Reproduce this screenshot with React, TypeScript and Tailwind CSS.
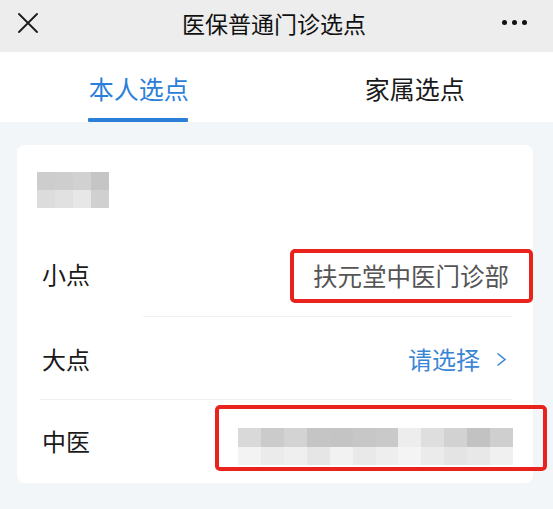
import React from "react";

const font = { fontFamily: '"Noto Sans CJK SC", "Noto Sans", sans-serif' };

const headerBlocks = [
  ["bg-[#cdcdcd]", "bg-[#cecece]", "bg-[#d1d1d1]", "bg-[#c5c5c5]"],
  ["bg-[#dcdcdc]", "bg-[#e1e1e1]", "bg-[#e7e7e7]", "bg-[#d0d0d0]"],
];

const nameBlocks = [
  [
    "bg-[#d9d9d9]",
    "bg-[#cbcbcb]",
    "bg-[#d3d3d3]",
    "bg-[#c5c5c5]",
    "bg-[#c4c4c4]",
    "bg-[#c7c7c7]",
    "bg-[#c9c9c9]",
    "bg-[#ededed]",
    "bg-[#dedede]",
    "bg-[#d2d2d2]",
    "bg-[#c2c2c2]",
    "bg-[#cfcfcf]",
  ],
  [
    "bg-[#f3f3f3]",
    "bg-[#ebebeb]",
    "bg-[#efefef]",
    "bg-[#e6e6e6]",
    "bg-[#f2f2f2]",
    "bg-[#e9e9e9]",
    "bg-[#eeeeee]",
    "bg-[#f4f4f4]",
    "bg-[#ebebeb]",
    "bg-[#e4e4e4]",
    "bg-[#e8e8e8]",
    "bg-[#f0f0f0]",
  ],
];

function Pixels({ rows }: { rows: string[][] }) {
  return (
    <div className="flex h-full w-full flex-col">
      {rows.map((row, i) => (
        <div key={i} className="flex flex-1">
          {row.map((cls, j) => (
            <div key={j} className={`flex-1 ${cls}`} />
          ))}
        </div>
      ))}
    </div>
  );
}

export default function App() {
  return (
    <div className="h-[509px] w-[553px] overflow-hidden bg-[#f3f6f9]" style={font}>
      {/* top bar */}
      <div className="flex h-[52px] items-center justify-between bg-[#ededed] pl-[18px] pr-[26px]">
        <svg width="20" height="20" viewBox="0 0 20 20" className="-mt-[6px]">
          <path d="M1 1L19 19M19 1L1 19" stroke="#1a1a1a" strokeWidth="1.8" strokeLinecap="round" />
        </svg>
        <div className="-mt-[6px] ml-[8px] text-[23px] leading-[26px] text-[#111]">医保普通门诊选点</div>
        <div className="-mt-[8px] flex gap-[5px]">
          <span className="h-[5px] w-[5px] rounded-full bg-[#111]" />
          <span className="h-[5px] w-[5px] rounded-full bg-[#111]" />
          <span className="h-[5px] w-[5px] rounded-full bg-[#111]" />
        </div>
      </div>

      {/* tabs */}
      <div className="flex h-[70px] bg-white">
        <div className="flex flex-1 flex-col items-center justify-between pt-[23px]">
          <div className="ml-[1px] text-[25px] leading-[27px] text-[#2b7fd9]">本人选点</div>
          <div className="h-[4px] w-[100px] rounded-[1px] bg-[#2b7fd9]" />
        </div>
        <div className="flex flex-1 flex-col items-center pt-[23px]">
          <div className="text-[25px] leading-[27px] text-[#1a1a1a]">家属选点</div>
        </div>
      </div>

      {/* card */}
      <div className="ml-[17px] mr-[20px] mt-[23px] rounded-[8px] bg-white">
        <div className="h-[85px] pl-[20px] pt-[27px]">
          <div className="h-[36px] w-[72px]">
            <Pixels rows={headerBlocks} />
          </div>
        </div>

        <div className="flex h-[86px] items-start justify-between pl-[25px]">
          <div className="mt-[31px] text-[24px] leading-[26px] text-[#1a1a1a]">小点</div>
          <div className="mt-[19px] flex h-[54px] w-[243px] items-center justify-end rounded-[5px] border-[4px] border-[#e8231e] pr-[20px]">
            <span className="text-[24.5px] leading-[26px] text-[#555]">扶元堂中医门诊部</span>
          </div>
        </div>
        <div className="ml-[126px] mr-[21px] h-px bg-[#eef0f3]" />

        <div className="flex h-[82px] items-center justify-between pl-[25px] pr-[26px]">
          <div className="mt-[2px] text-[24px] leading-[26px] text-[#1a1a1a]">大点</div>
          <div className="mt-[2px] flex items-center gap-[16px]">
            <span className="text-[24px] leading-[26px] text-[#3a86d4]">请选择</span>
            <svg width="11" height="15" viewBox="0 0 11 15">
              <path d="M1.5 1.5L9 7.5L1.5 13.5" fill="none" stroke="#3a86d4" strokeWidth="1.6" />
            </svg>
          </div>
        </div>
        <div className="ml-[23px] mr-[21px] h-px bg-[#eef0f3]" />

        <div className="relative flex h-[83px] items-center pl-[25px]">
          <div className="-mt-[1px] text-[24px] leading-[26px] text-[#1a1a1a]">中医</div>
          <div className="absolute left-[198px] top-[5px] h-[66px] w-[332px] rounded-[5px] border-[4px] border-[#e8231e] pl-[19px] pt-[19px]">
            <div className="h-[37px] w-[275px]">
              <Pixels rows={nameBlocks} />
            </div>
          </div>
        </div>
      </div>
    </div>
  );
}
